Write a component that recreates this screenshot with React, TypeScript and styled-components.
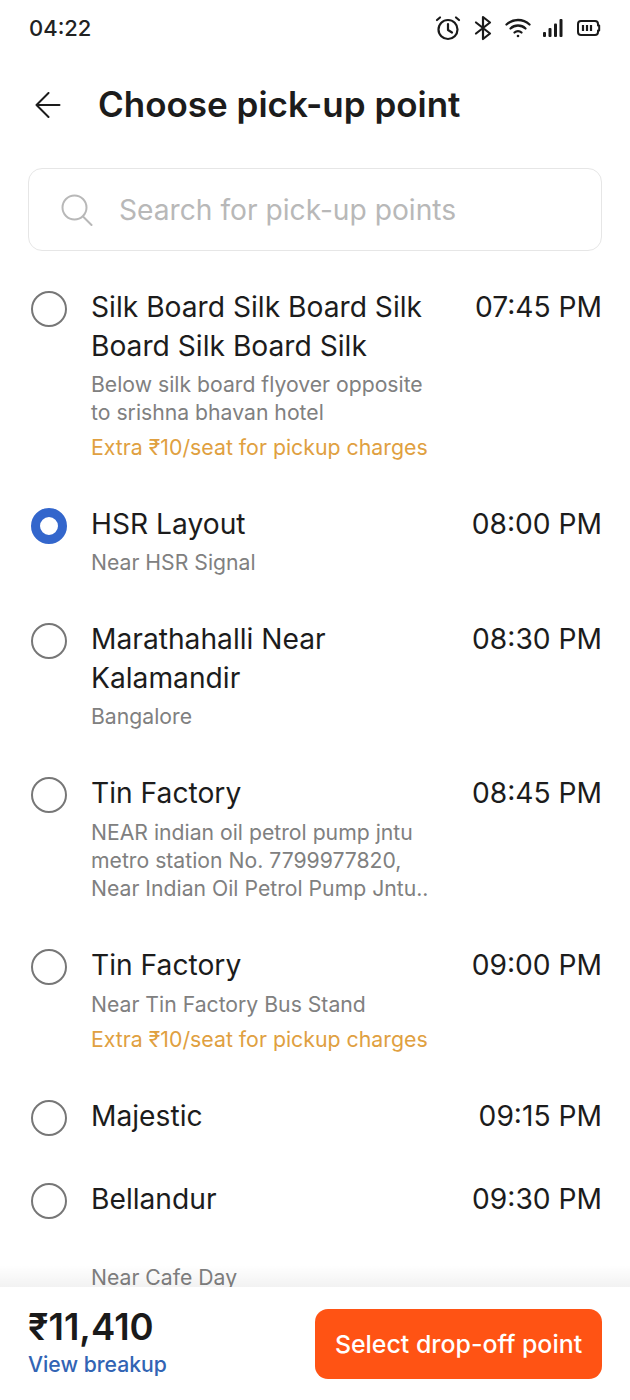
import React from 'react'
import styled, { createGlobalStyle } from 'styled-components'

const GlobalStyle = createGlobalStyle`
  html, body {
    margin: 0;
    padding: 0;
    background: #fff;
  }
  * {
    box-sizing: border-box;
  }
`

const Page = styled.div`
  display: flex;
  flex-direction: column;
  width: 630px;
  height: 1400px;
  overflow: hidden;
  background: #fff;
  color: #1a1a1a;
  font-family: Inter, 'Noto Sans', sans-serif;
`

const StatusBar = styled.div`
  display: flex;
  justify-content: space-between;
  align-items: center;
  height: 56px;
  padding: 0 29px;
  flex-shrink: 0;
`

const Clock = styled.div`
  font-size: 22px;
  font-weight: 500;
  color: #222;
`

const StatusIcons = styled.div`
  display: flex;
  align-items: center;
  gap: 12px;
  color: #1a1a1a;
`

const Header = styled.div`
  display: flex;
  align-items: center;
  gap: 37px;
  height: 46px;
  margin-top: 26px;
  padding: 0 35px;
  flex-shrink: 0;
`

const Title = styled.h1`
  margin: 0 0 2px;
  font-size: 35px;
  font-weight: 600;
  color: #1c1c1c;
  white-space: nowrap;
`

const SearchBox = styled.div`
  display: flex;
  align-items: center;
  gap: 26px;
  height: 83px;
  margin: 40px 28px 0;
  padding: 0 32px;
  border: 1.5px solid #e6e6e6;
  border-radius: 14px;
  flex-shrink: 0;
`

const SearchHint = styled.div`
  font-size: 28.2px;
  color: #b8b8b8;
`

const List = styled.div`
  display: flex;
  flex-direction: column;
  gap: 44px;
  flex: 1;
  min-height: 0;
  overflow: hidden;
  padding: 37px 28px 0 31px;
`

const Row = styled.div`
  display: flex;
  align-items: flex-start;
`

const Radio = styled.div<{ $selected?: boolean }>`
  width: 36px;
  height: 36px;
  margin-top: 2.5px;
  margin-right: 24px;
  border-radius: 50%;
  flex-shrink: 0;
  background: #fff;
  border: ${props => (props.$selected ? '9.5px solid #3366cc' : '2px solid #777')};
`

const Info = styled.div`
  display: flex;
  flex-direction: column;
  flex: 1;
  min-width: 0;
`

const Name = styled.div`
  max-width: 345px;
  font-size: 28.2px;
  line-height: 39px;
  color: #1c1c1c;
`

const Detail = styled.div<{ $gap?: number }>`
  max-width: 345px;
  margin-top: ${props => props.$gap ?? 4}px;
  font-size: 21.2px;
  line-height: 28px;
  color: #808080;
`

const Extra = styled.div`
  margin-top: 7px;
  font-size: 21.3px;
  line-height: 28px;
  color: #e0a040;
`

const Time = styled.div`
  font-size: 28.2px;
  line-height: 39px;
  color: #1c1c1c;
  white-space: nowrap;
`

const Footer = styled.div`
  position: relative;
  display: flex;
  justify-content: space-between;
  align-items: flex-start;
  height: 113px;
  padding: 21px 28px 0;
  background: #fff;
  flex-shrink: 0;

  &::before {
    content: '';
    position: absolute;
    left: 0;
    right: 0;
    top: -22px;
    height: 22px;
    background: linear-gradient(to bottom, rgba(0, 0, 0, 0), rgba(0, 0, 0, 0.05));
  }
`

const Price = styled.div`
  font-size: 36.5px;
  line-height: 38px;
  font-weight: 600;
  color: #1a1a1a;
`

const Breakup = styled.div`
  margin-top: 4px;
  font-size: 21.2px;
  line-height: 28px;
  font-weight: 500;
  color: #3264b4;
`

const SelectButton = styled.div`
  display: flex;
  justify-content: center;
  align-items: center;
  width: 287px;
  height: 70px;
  margin-top: 1px;
  border-radius: 13px;
  background: #ff5314;
  color: #fff;
  font-size: 24.9px;
  font-weight: 500;
`

const points = [
  {
    name: 'Silk Board Silk Board Silk Board Silk Board Silk',
    time: '07:45 PM',
    detail: 'Below silk board flyover opposite to srishna bhavan hotel',
    extra: 'Extra ₹10/seat for pickup charges',
  },
  { name: 'HSR Layout', time: '08:00 PM', detail: 'Near HSR Signal', selected: true },
  { name: 'Marathahalli Near Kalamandir', time: '08:30 PM', detail: 'Bangalore' },
  {
    name: 'Tin Factory',
    time: '08:45 PM',
    detail: 'NEAR indian oil petrol pump jntu metro station No. 7799977820, Near Indian Oil Petrol Pump Jntu..',
    detailGap: 5,
  },
  {
    name: 'Tin Factory',
    time: '09:00 PM',
    detail: 'Near Tin Factory Bus Stand',
    detailGap: 5,
    extra: 'Extra ₹10/seat for pickup charges',
  },
  { name: 'Majestic', time: '09:15 PM' },
  { name: 'Bellandur', time: '09:30 PM', detail: 'Near Cafe Day', detailGap: 44 },
]

const AlarmIcon = () => (
  <svg width="26" height="26" viewBox="0 0 26 26" fill="none" stroke="currentColor" strokeWidth="2.2" strokeLinecap="round" strokeLinejoin="round">
    <circle cx="13" cy="14.5" r="9.5" />
    <path d="M13 9v6l4 2.5" />
    <path d="M2 5l3-2.5M24 5l-3-2.5" />
  </svg>
)

const BluetoothIcon = () => (
  <svg width="20" height="26" viewBox="0 0 20 26" fill="none" stroke="currentColor" strokeWidth="2.2" strokeLinecap="round" strokeLinejoin="round">
    <path d="M3 7.5l14 11-7 5.5V2l7 5.5-14 11" />
  </svg>
)

const WifiIcon = () => (
  <svg width="26" height="22" viewBox="0 0 26 22" fill="none" stroke="currentColor" strokeWidth="2.3" strokeLinecap="round">
    <path d="M1.5 7.5c6.5-6 16.5-6 23 0" />
    <path d="M5.5 11.5c4.3-4 10.7-4 15 0" />
    <path d="M9.5 15.5c2-1.8 5-1.8 7 0" />
    <circle cx="13" cy="19" r="1.3" fill="currentColor" stroke="none" />
  </svg>
)

const SignalIcon = () => (
  <svg width="22" height="20" viewBox="0 0 22 20" fill="currentColor">
    <rect x="0" y="14" width="3" height="5" rx="1" />
    <rect x="5.5" y="10" width="3" height="9" rx="1" />
    <rect x="11" y="5.5" width="3" height="13.5" rx="1" />
    <rect x="16.5" y="1" width="3" height="18" rx="1" />
  </svg>
)

const BatteryIcon = () => (
  <svg width="24" height="18" viewBox="0 0 24 18" fill="none" stroke="currentColor" strokeWidth="2">
    <path d="M4 2h14a3 3 0 0 1 3 3v1.5h1.2v5H21V13a3 3 0 0 1-3 3H4a3 3 0 0 1-3-3V5a3 3 0 0 1 3-3z" strokeLinejoin="round" />
    <path d="M6 6v6M10 6v6M14 6v6" strokeWidth="2.2" />
  </svg>
)

const BackIcon = () => (
  <svg width="26" height="26" viewBox="0 0 26 26" fill="none" stroke="#1c1c1c" strokeWidth="2" strokeLinecap="round" strokeLinejoin="round">
    <path d="M1.5 13h23M13.5 1L1.5 13l12 12" />
  </svg>
)

const SearchIcon = () => (
  <svg width="32" height="32" viewBox="0 0 32 32" fill="none" stroke="#b8b8b8" strokeWidth="2" strokeLinecap="round">
    <circle cx="13.5" cy="13.5" r="12" />
    <path d="M22.5 23l8 8" />
  </svg>
)

const App = () => (
  <Page>
    <GlobalStyle />
    <StatusBar>
      <Clock>04:22</Clock>
      <StatusIcons>
        <AlarmIcon />
        <BluetoothIcon />
        <WifiIcon />
        <SignalIcon />
        <BatteryIcon />
      </StatusIcons>
    </StatusBar>
    <Header>
      <BackIcon />
      <Title>Choose pick-up point</Title>
    </Header>
    <SearchBox>
      <SearchIcon />
      <SearchHint>Search for pick-up points</SearchHint>
    </SearchBox>
    <List>
      {points.map(point => (
        <Row key={point.time}>
          <Radio $selected={point.selected} />
          <Info>
            <Name>{point.name}</Name>
            {point.detail && <Detail $gap={point.detailGap}>{point.detail}</Detail>}
            {point.extra && <Extra>{point.extra}</Extra>}
          </Info>
          <Time>{point.time}</Time>
        </Row>
      ))}
    </List>
    <Footer>
      <div>
        <Price>₹11,410</Price>
        <Breakup>View breakup</Breakup>
      </div>
      <SelectButton>Select drop-off point</SelectButton>
    </Footer>
  </Page>
)

export default App
